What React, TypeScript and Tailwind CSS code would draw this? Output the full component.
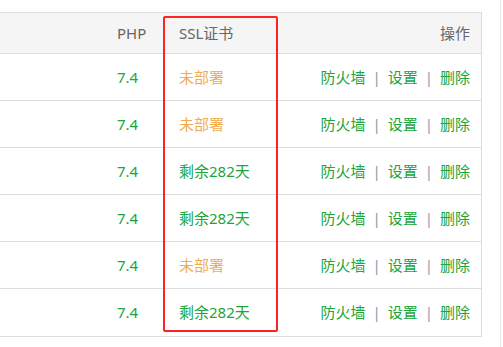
const rows = [
  { php: "7.4", ssl: "未部署", ok: false },
  { php: "7.4", ssl: "未部署", ok: false },
  { php: "7.4", ssl: "剩余282天", ok: true },
  { php: "7.4", ssl: "剩余282天", ok: true },
  { php: "7.4", ssl: "未部署", ok: false },
  { php: "7.4", ssl: "剩余282天", ok: true },
];

function Actions() {
  return (
    <div className="flex items-center justify-end text-[#20a53a]">
      <span>防火墙</span>
      <span className="mx-[7px] text-[#8a9bb0]">|</span>
      <span>设置</span>
      <span className="mx-[7px] text-[#8a9bb0]">|</span>
      <span>删除</span>
    </div>
  );
}

export default function App() {
  return (
    <div
      className="relative flex w-[503px] h-[347px] bg-white overflow-hidden text-[15px]"
      style={{ fontFamily: '"Noto Sans", "Noto Sans CJK SC", sans-serif' }}
    >
      <div className="mt-[12px] w-[482px] self-start border border-l-0 border-[#ddd]">
        <div className="grid grid-cols-[107px_62px_1fr_auto] h-[41px] items-center bg-[#f5f5f5] text-[#666] border-b border-[#ddd]">
          <div />
          <div className="pl-[10px]">PHP</div>
          <div className="pl-[10px]">SSL证书</div>
          <div className="pr-[11px] text-right">操作</div>
        </div>
        {rows.map((row, i) => (
          <div
            key={i}
            className={`grid grid-cols-[107px_62px_1fr_auto] h-[47px] items-center ${
              i < rows.length - 1 ? "border-b border-[#ddd]" : ""
            }`}
          >
            <div />
            <div className="pl-[10px] text-[#20a53a]">{row.php}</div>
            <div
              className={`pl-[10px] ${
                row.ok ? "text-[#20a53a]" : "text-[#f0ad4e]"
              }`}
            >
              {row.ssl}
            </div>
            <div className="pr-[11px]">
              <Actions />
            </div>
          </div>
        ))}
      </div>
      <div className="ml-auto w-[3px] h-full border-l border-[#e8e8e8]" />
      <div className="absolute left-[163px] top-[16px] w-[115px] h-[316px] border-2 border-[#f22] rounded-[2px]" />
    </div>
  );
}
